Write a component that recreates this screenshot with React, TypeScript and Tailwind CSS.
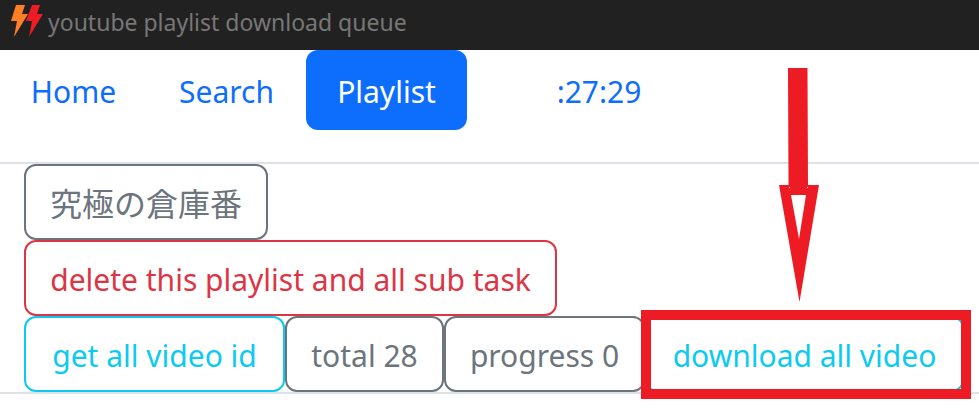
import type { ReactNode } from "react";
import { clsx } from "clsx";

const tones = {
  gray: "border-[#6c757d] text-[#6c757d]",
  red: "border-[#dc3545] text-[#dc3545]",
  cyan: "border-[#0dcaf0] text-[#0dcaf0]",
};

function OutlineButton({
  tone,
  width,
  children,
}: {
  tone: keyof typeof tones;
  width: string;
  children: ReactNode;
}) {
  return (
    <button
      type="button"
      className={clsx(
        "block h-[76px] shrink-0 rounded-xl border-2 pt-1 text-center whitespace-nowrap",
        tones[tone],
        width,
      )}
    >
      {children}
    </button>
  );
}

function NavLink({
  active,
  width,
  children,
}: {
  active?: boolean;
  width: string;
  children: ReactNode;
}) {
  return (
    <a
      href="#"
      aria-current={active ? "page" : undefined}
      className={clsx(
        "flex h-20 shrink-0 items-center justify-center rounded-xl pt-1",
        active ? "bg-[#0d6efd] text-white" : "text-[#0d6efd]",
        width,
      )}
    >
      {children}
    </a>
  );
}

function BoltLogo() {
  return (
    <svg width="34" height="34" viewBox="0 0 34 34" aria-hidden="true">
      <path d="M6 1h9l-3 9h6L4 33l3-16H1z" fill="#ff7f27" />
      <path d="M22 1h8l-3 9h6L19 33l3-16h-6z" fill="#ed1c24" />
    </svg>
  );
}

function Arrow() {
  return (
    <svg
      width="40"
      height="234"
      viewBox="0 0 40 234"
      className="absolute bottom-[90px] left-[134px]"
      aria-hidden="true"
    >
      <path
        d="M9 0h19.5l.5 117h11L20.5 234 0 117h9.5zM12 127l8 44 7-44z"
        fill="#ed1c24"
        fillRule="evenodd"
      />
      <path d="M10 119h1v1h-1zM28 119h1v1h-1z" fill="white" />
    </svg>
  );
}

export default function App() {
  return (
    <div className="min-h-screen overflow-hidden bg-white font-['Noto_Sans','Noto_Sans_CJK_JP',sans-serif] text-[30px] leading-10">
      <header className="flex h-[50px] items-center bg-[#212121] pb-2 pl-2.5 text-[23px] text-[#777777]">
        <BoltLogo />
        <h1 className="pl-1 pt-0.5">youtube playlist download queue</h1>
      </header>
      <nav className="flex h-[114px] border-b-2 border-[#dee2e6]">
        <NavLink width="w-[147px]">Home</NavLink>
        <NavLink width="w-[159px]">Search</NavLink>
        <NavLink width="w-[161px]" active>
          Playlist
        </NavLink>
        <NavLink width="w-[264px]">:27:29</NavLink>
      </nav>
      <main className="border-b-2 border-[#dee2e6] pl-6">
        <OutlineButton tone="gray" width="w-[244px]">
          <span className="text-[32px]">究極の倉庫番</span>
        </OutlineButton>
        <OutlineButton tone="red" width="w-[533px]">
          delete this playlist and all sub task
        </OutlineButton>
        <div className="flex h-[76px]">
          <OutlineButton tone="cyan" width="w-[261px]">
            get all video id
          </OutlineButton>
          <OutlineButton tone="gray" width="w-[159px]">
            total 28
          </OutlineButton>
          <OutlineButton tone="gray" width="w-[201px]">
            progress 0
          </OutlineButton>
          <div className="relative shrink-0">
            <OutlineButton tone="cyan" width="w-[319px]">
              download all video
            </OutlineButton>
            <div className="pointer-events-none absolute -bottom-[7px] -left-1 -right-[7px] -top-1.5 border-10 border-[#ed1c24]" />
            <Arrow />
          </div>
        </div>
      </main>
    </div>
  );
}
